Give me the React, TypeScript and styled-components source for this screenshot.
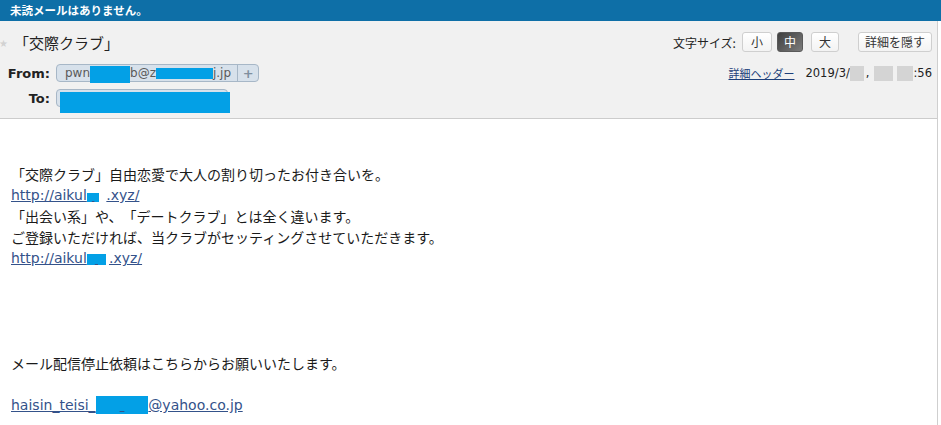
import React from "react";
import styled, { createGlobalStyle, css } from "styled-components";

const GlobalStyle = createGlobalStyle`
  html, body { margin: 0; padding: 0; background: #ffffff; }
  body {
    font-family: "DejaVu Sans", "Noto Sans CJK JP", sans-serif;
    color: #1a1a1a;
    text-spacing-trim: space-all;
  }
  * { box-sizing: border-box; }
`;

const JP = `"Noto Sans CJK JP", "DejaVu Sans", sans-serif`;
const LATIN = `"DejaVu Sans", "Noto Sans CJK JP", sans-serif`;

const Page = styled.div`
  width: 941px;
  height: 425px;
  overflow: hidden;
  background: #ffffff;
`;

const TopBar = styled.div`
  height: 21px;
  background: #0e6fa7;
  color: #ffffff;
  font-family: ${JP};
  font-weight: 700;
  font-size: 11.5px;
  line-height: 21px;
  padding-left: 10px;
`;

const Main = styled.div`
  width: 938px;
  border-right: 1px solid #cfcfcf;
  height: 404px;
`;

const Header = styled.div`
  background: #f1f1f1;
  border-bottom: 1px solid #cccccc;
  padding: 11px 5px 11px 0;
  height: 98px;
`;

const Row = styled.div<{ $top?: number }>`
  display: flex;
  align-items: center;
  justify-content: space-between;
  margin-top: ${(p) => p.$top ?? 0}px;
`;

const TitleGroup = styled.div`
  display: flex;
  align-items: center;
  height: 20px;
`;

const Star = styled.span`
  color: #d2d2d2;
  font-size: 10px;
  line-height: 1;
  width: 9px;
  margin-left: -1px;
  margin-top: 4px;
  font-family: ${LATIN};
`;

const Title = styled.span`
  font-family: ${JP};
  font-size: 15px;
  color: #222;
  margin-left: 6px;
  margin-top: 1px;
`;

const Controls = styled.div`
  display: flex;
  align-items: center;
`;

const SizeLabel = styled.span`
  font-family: ${JP};
  font-size: 12px;
  color: #222;
  margin-right: 6px;
`;

const Btn = styled.button<{ $active?: boolean; $gap?: number; $pad?: number }>`
  height: 20px;
  margin: 0 0 0 ${(p) => p.$gap ?? 0}px;
  padding: 0 ${(p) => p.$pad ?? 8}px;
  border: 1px solid #cfcfcf;
  border-radius: 3px;
  font-family: ${JP};
  font-size: 12px;
  line-height: 18px;
  color: #333;
  background: linear-gradient(#ffffff, #f3f3f3);
  ${(p) =>
    p.$active &&
    css`
      background: linear-gradient(135deg, #3f3f3f, #7c7c7c);
      border-color: #5a5a5a;
      color: #ffffff;
    `}
`;

const AddrRow = styled.div`
  display: flex;
  align-items: center;
  height: 18px;
`;

const Label = styled.span`
  width: 50px;
  text-align: right;
  font-family: ${LATIN};
  font-weight: 700;
  font-size: 13px;
  color: #222;
`;

const Pill = styled.div<{ $width?: number }>`
  position: relative;
  display: flex;
  align-items: center;
  height: 18px;
  margin-left: 6px;
  ${(p) => p.$width && css`width: ${p.$width}px;`}
  background: #d7e1eb;
  border: 1px solid #a7b7c7;
  border-radius: 4px;
  font-family: ${LATIN};
  font-size: 12px;
  color: #5a5a5a;
`;

const PillText = styled.span`
  display: flex;
  align-items: center;
  padding-left: 8px;
  height: 100%;
  white-space: nowrap;
`;

const PillPlus = styled.span`
  width: 21px;
  height: 100%;
  margin-left: 6px;
  border-left: 1px solid #a7b7c7;
  display: flex;
  align-items: center;
  justify-content: center;
  color: #7f8f9f;
  font-weight: 700;
  font-size: 13px;
`;

const BlueBlock = styled.span<{ $w: number; $h: number; $dy?: number }>`
  display: inline-block;
  width: ${(p) => p.$w}px;
  height: ${(p) => p.$h}px;
  background: #03a0e6;
  position: relative;
  top: ${(p) => p.$dy ?? 0}px;
`;

const ToCover = styled.span`
  position: absolute;
  left: 3px;
  top: 2px;
  width: 170px;
  height: 21px;
  background: #03a0e6;
`;

const Meta = styled.div`
  display: flex;
  align-items: center;
  font-size: 12px;
  color: #222;
`;

const HeaderLink = styled.a`
  font-family: ${JP};
  font-size: 11px;
  color: #1d3f7a;
  text-decoration: underline;
  margin-right: 11px;
`;

const DateText = styled.span`
  font-family: ${LATIN};
  font-size: 11.5px;
  display: flex;
  align-items: center;
  white-space: nowrap;
`;

const GrayBlock = styled.span<{ $w: number; $l?: number; $r?: number }>`
  display: inline-block;
  width: ${(p) => p.$w}px;
  height: 15px;
  margin: 0 ${(p) => p.$r ?? 0}px 0 ${(p) => p.$l ?? 0}px;
  background: #d4d4d4;
`;

const MailBody = styled.div`
  padding: 45px 0 0 11px;
  font-family: ${LATIN};
  font-size: 14px;
  line-height: 21px;
  color: #1a1a1a;
`;

const Line = styled.div<{ $jp?: boolean }>`
  height: 21px;
  white-space: nowrap;
  font-family: ${(p) => (p.$jp ? JP : LATIN)};
`;

const MailLink = styled.a`
  color: #34528a;
  text-decoration: underline;
`;

const InlineRedact = styled.span<{ $size: number; $pad: number; $after?: number }>`
  background: #03a0e6;
  font-size: ${(p) => p.$size}px;
  padding: 0 ${(p) => p.$pad}px;
  margin-right: ${(p) => p.$after ?? 0}px;
`;

export default function App() {
  return (
    <Page>
      <GlobalStyle />
      <TopBar>未読メールはありません。</TopBar>
      <Main>
        <Header>
          <Row>
            <TitleGroup>
              <Star>★</Star>
              <Title>「交際クラブ」</Title>
            </TitleGroup>
            <Controls>
              <SizeLabel>文字サイズ:</SizeLabel>
              <Btn>小</Btn>
              <Btn $active $gap={5} $pad={6}>中</Btn>
              <Btn $gap={8} $pad={7}>大</Btn>
              <Btn $gap={19} $pad={6}>詳細を隠す</Btn>
            </Controls>
          </Row>
          <Row $top={12}>
            <AddrRow>
              <Label>From:</Label>
              <Pill>
                <PillText>
                  pwn
                  <BlueBlock $w={40} $h={17} $dy={1} />
                  b@z
                  <BlueBlock $w={57} $h={11} />
                  j.jp
                </PillText>
                <PillPlus>+</PillPlus>
              </Pill>
            </AddrRow>
            <Meta>
              <HeaderLink href="#">詳細ヘッダー</HeaderLink>
              <DateText>
                2019/3/
                <GrayBlock $w={14} $r={2} />
                ,
                <GrayBlock $w={19} $l={5} $r={4} />
                <GrayBlock $w={16} />
                :56
              </DateText>
            </Meta>
          </Row>
          <Row $top={7}>
            <AddrRow>
              <Label>To:</Label>
              <Pill $width={172}>
                <ToCover />
              </Pill>
            </AddrRow>
          </Row>
        </Header>
        <MailBody>
          <Line $jp>「交際クラブ」自由恋愛で大人の割り切ったお付き合いを。</Line>
          <Line>
            <MailLink href="#">
              http://aikul<InlineRedact $size={8} $pad={5} $after={7}>{" "}</InlineRedact>.xyz/
            </MailLink>
          </Line>
          <Line $jp>「出会い系」や、「デートクラブ」とは全く違います。</Line>
          <Line $jp>ご登録いただければ、当クラブがセッティングさせていただきます。</Line>
          <Line>
            <MailLink href="#">
              http://aikul<InlineRedact $size={10} $pad={8} $after={3}>{" "}</InlineRedact>.xyz/
            </MailLink>
          </Line>
          <Line />
          <Line />
          <Line />
          <Line />
          <Line $jp>メール配信停止依頼はこちらからお願いいたします。</Line>
          <Line />
          <Line>
            <MailLink href="#">
              haisin_teisi_<InlineRedact $size={15} $pad={24}>{" "}</InlineRedact>@yahoo.co.jp
            </MailLink>
          </Line>
        </MailBody>
      </Main>
    </Page>
  );
}
